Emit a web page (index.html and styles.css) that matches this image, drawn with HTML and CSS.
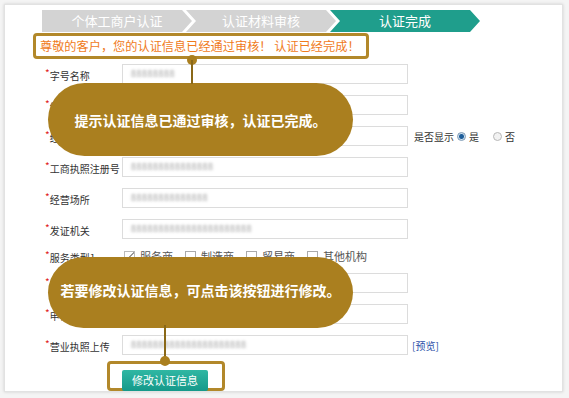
FILE: index.html
```html
<!DOCTYPE html>
<html lang="zh-CN">
<head>
    <meta charset="UTF-8">
    <meta name="viewport" content="width=device-width, initial-scale=1.0">
    <title>认证完成</title>
    <link rel="stylesheet" href="styles.css">
</head>
<body>
    <div class="card">
        <!-- step bar -->
        <div class="steps">
            <div class="step step-first">个体工商户认证</div>
            <div class="step">认证材料审核</div>
            <div class="step step-active">认证完成</div>
        </div>

        <div class="notice">尊敬的客户，您的认证信息已经通过审核！ 认证已经完成！</div>

        <div class="form">
            <div class="form-row">
                <label class="form-label"><i>*</i>字号名称</label>
                <div class="form-input"><span class="blur">88888888</span></div>
            </div>
            <div class="form-row">
                <label class="form-label"><i>*</i>经营者姓名</label>
                <div class="form-input"><span class="blur">888888</span></div>
            </div>
            <div class="form-row">
                <label class="form-label"><i>*</i>经营者电话</label>
                <div class="form-input"><span class="blur">88888888888</span></div>
                <div class="show-opt">
                    是否显示
                    <span class="radio radio-on"></span>是
                    <span class="radio"></span>否
                </div>
            </div>
            <div class="form-row">
                <label class="form-label"><i>*</i>工商执照注册号</label>
                <div class="form-input"><span class="blur">888888888888888</span></div>
            </div>
            <div class="form-row">
                <label class="form-label"><i>*</i>经营场所</label>
                <div class="form-input"><span class="blur">88888888888888</span></div>
            </div>
            <div class="form-row">
                <label class="form-label"><i>*</i>发证机关</label>
                <div class="form-input"><span class="blur">8888888888888888888888</span></div>
            </div>
            <div class="form-row row-check">
                <label class="form-label"><i>*</i>服务类型1</label>
                <div class="checks">
                    <span class="check check-on"></span>服务商
                    <span class="check"></span>制造商
                    <span class="check"></span>贸易商
                    <span class="check"></span>其他机构
                </div>
            </div>
            <div class="form-row">
                <label class="form-label"><i>*</i>主营产品</label>
                <div class="form-input"><span class="blur">8888888888</span></div>
            </div>
            <div class="form-row">
                <label class="form-label"><i>*</i>申请人</label>
                <div class="form-input"><span class="blur">88888888</span></div>
            </div>
            <div class="form-row">
                <label class="form-label"><i>*</i>营业执照上传</label>
                <div class="form-input"><span class="blur">888888888888888888888</span></div>
                <a class="preview">[预览]</a>
            </div>
            <div class="btn-frame">
                <button class="btn-edit">修改认证信息</button>
            </div>
        </div>

        <!-- guide overlays -->
        <div class="bubble bubble-top">提示认证信息已通过审核，认证已完成。</div>
        <div class="bubble bubble-bottom">若要修改认证信息，可点击该按钮进行修改。</div>
        <span class="dot dot-top"></span>
        <span class="line line-top"></span>
        <span class="line line-bottom"></span>
        <span class="dot dot-bottom"></span>
    </div>
</body>
</html>
```

FILE: styles.css
```css
* {
    margin: 0;
    padding: 0;
    box-sizing: border-box;
    font-family: "Noto Sans CJK SC", "Liberation Sans", sans-serif;
}

body {
    background-color: #f4f4f4;
    width: 569px;
    height: 398px;
    padding: 4px;
}

.card {
    position: relative;
    width: 559px;
    height: 388px;
    background-color: #fff;
    border: 1px solid #e2e2e2;
    box-shadow: 0 0 3px rgba(0, 0, 0, 0.15);
    padding: 5px 0 0 37px;
}

/* steps */
.steps {
    display: flex;
    height: 22px;
}

.step {
    width: 150px;
    height: 22px;
    line-height: 22px;
    text-align: center;
    font-size: 13px;
    color: #fff;
    background-color: #d3d3d3;
    margin-left: -6px;
    clip-path: polygon(0 0, 140px 0, 150px 50%, 140px 100%, 0 100%, 10px 50%);
}

.step-first {
    margin-left: 0;
    clip-path: polygon(0 0, 140px 0, 150px 50%, 140px 100%, 0 100%);
}

.step-active {
    background-color: #1f9e8c;
}

/* notice */
.notice {
    width: 336px;
    height: 26px;
    margin: 1px 0 0 -9px;
    padding-left: 4px;
    border: 3px solid #b2882a;
    border-radius: 4px;
    font-size: 12.2px;
    line-height: 20px;
    color: #f07b1c;
    white-space: nowrap;
}

/* form */
.form {
    margin: 5px 0 0 3px;
    display: flex;
    flex-direction: column;
    gap: 11px;
}

.form-row {
    display: flex;
    align-items: center;
    height: 20px;
}

.row-check {
    height: 12px;
}

.form-label {
    width: 77px;
    font-size: 10px;
    color: #333;
    white-space: nowrap;
}

.form-label i {
    font-style: normal;
    color: #e02020;
    font-size: 10px;
    vertical-align: 3px;
}

.form-input {
    width: 286px;
    height: 20px;
    border: 1px solid #dcdcdc;
    padding-left: 8px;
    font-size: 9px;
    line-height: 18px;
}

.blur {
    color: transparent;
    text-shadow: 0 0 3px #9a9a9a;
    letter-spacing: 0.5px;
}

.show-opt {
    margin-left: 6px;
    font-size: 10px;
    color: #333;
    display: flex;
    align-items: center;
}

.radio {
    display: inline-block;
    width: 9px;
    height: 9px;
    border-radius: 50%;
    border: 1px solid #b8b8b8;
    background: #f2f2f2;
    margin: 0 3px 0 14px;
}

.radio-on {
    margin-left: 3px;
    background: radial-gradient(circle, #1d5d9a 0 2px, #cfe0ef 3px);
    border-color: #7d9ab5;
}

.checks {
    margin-left: 2px;
    display: flex;
    align-items: center;
    font-size: 11px;
    color: #555;
}

.check {
    display: inline-block;
    width: 11px;
    height: 11px;
    border: 1px solid #aaa;
    background: #fff;
    margin: 0 5px 0 12px;
}

.check:first-child {
    margin-left: 0;
}

.check-on {
    border-color: #bbb;
    background: linear-gradient(135deg, transparent 45%, #999 46% 56%, transparent 57%);
}

.preview {
    margin-left: 4px;
    font-size: 10px;
    color: #2c4fa8;
}

.btn-frame {
    margin: -5px 0 0 62px;
    width: 118px;
    height: 30px;
    border: 3px solid #b2882a;
    border-radius: 4px;
    padding: 2px 0 0 12px;
}

.btn-edit {
    width: 86px;
    height: 21px;
    border: none;
    border-radius: 2px;
    background: linear-gradient(#30b7a3, #15998a);
    color: #fff;
    font-size: 11px;
}

/* guide overlays */
.bubble {
    position: absolute;
    left: 43px;
    width: 305px;
    border-radius: 37px;
    background-color: #aa7f1f;
    color: #fff;
    font-size: 14px;
    font-weight: bold;
    display: flex;
    justify-content: center;
    align-items: center;
    white-space: nowrap;
}

.bubble-top {
    top: 78px;
    height: 73px;
}

.bubble-bottom {
    top: 252px;
    height: 71px;
    padding-bottom: 6px;
}

.dot {
    position: absolute;
    width: 10px;
    height: 10px;
    border-radius: 50%;
    background-color: #aa7f1f;
}

.dot-top {
    left: 182px;
    top: 50px;
}

.dot-bottom {
    left: 155px;
    top: 351px;
}

.line {
    position: absolute;
    width: 2px;
    background-color: #8a6818;
}

.line-top {
    left: 186px;
    top: 55px;
    height: 24px;
}

.line-bottom {
    left: 159px;
    top: 320px;
    height: 34px;
}
```
